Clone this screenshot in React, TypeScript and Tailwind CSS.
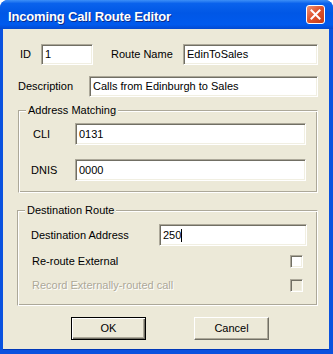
import React from "react";

const sunken =
  "border border-t-[#ACA899] border-l-[#ACA899] border-r-white border-b-white shadow-[inset_1px_1px_0_#716F64,inset_-1px_-1px_0_#F1EFE2]";

function Field({ value, className, caret }: { value: string; className: string; caret?: boolean }) {
  return (
    <div className={`bg-white flex items-center pl-[3px] text-[11px] text-black ${sunken} ${className}`}>
      <span className="leading-none">{value}</span>
      {caret && <span className="w-px h-[13px] bg-black" />}
    </div>
  );
}

function Check({ disabled }: { disabled?: boolean }) {
  return <div className={`w-[13px] h-[13px] ${sunken} ${disabled ? "bg-[#ECE9D8]" : "bg-white"}`} />;
}

function Group({ title, className, children }: { title: string; className: string; children: React.ReactNode }) {
  // etched frame like the classic group box
  return (
    <div
      className={`relative border border-t-[#ACA899] border-l-[#ACA899] border-r-white border-b-white shadow-[inset_1px_1px_0_#fff,inset_-1px_-1px_0_#ACA899] ${className}`}
    >
      <span className="absolute left-[7px] top-[-8px] bg-[#ECE9D8] px-[2px] text-[11px] leading-[14px]">{title}</span>
      {children}
    </div>
  );
}

export default function App() {
  return (
    <div className="w-[333px] h-[354px] flex flex-col rounded-t-[8px] bg-[#0A52DF] font-['Liberation_Sans',Arial,sans-serif] overflow-hidden">
      {/* title bar */}
      <div className="h-[29px] shrink-0 flex items-center pl-[8px] pr-[8px] pt-[4px] bg-[linear-gradient(#3D8FF7_0%,#0A62EC_12%,#0057E6_45%,#005AEE_85%,#0349D0_100%)]">
        <span className="flex-1 text-[13px] font-bold text-white leading-none tracking-[-0.15px] [text-shadow:1px_1px_0_#0B2B8A]">
          Incoming Call Route Editor
        </span>
        <div className="w-[19px] h-[19px] mb-[5px] rounded-[3px] border border-white bg-[linear-gradient(135deg,#EE9478_0%,#E0552F_45%,#C43B16_100%)] flex items-center justify-center">
          <svg width="11" height="11" viewBox="0 0 11 11">
            <path d="M1.5 1.5 L9.5 9.5 M9.5 1.5 L1.5 9.5" stroke="#fff" strokeWidth="2" strokeLinecap="square" />
          </svg>
        </div>
      </div>

      {/* body */}
      <div className="flex-1 ml-[3px] mr-[4px] mb-[4px] bg-[#ECE9D8] text-[11px] text-black flex flex-col shadow-[inset_0_-1px_0_#0038B8]">
        <div className="mt-[15px] h-[21px] flex items-center">
          <span className="ml-[17px] w-[21px]">ID</span>
          <Field value="1" className="w-[52px] h-[21px]" />
          <span className="ml-[18px] w-[72px]">Route Name</span>
          <Field value="EdinToSales" className="w-[135px] h-[21px]" />
        </div>

        <div className="mt-[11px] h-[21px] flex items-center">
          <span className="ml-[15px] w-[71px]">Description</span>
          <Field value="Calls from Edinburgh to Sales" className="w-[229px] h-[21px]" />
        </div>

        <Group title="Address Matching" className="mt-[13px] ml-[15px] w-[300px] h-[83px]">
          <div className="mt-[12px] h-[22px] flex items-center">
            <span className="ml-[14px] w-[42px]">CLI</span>
            <Field value="0131" className="w-[231px] h-[22px]" />
          </div>
          <div className="mt-[14px] h-[22px] flex items-center">
            <span className="ml-[12px] w-[44px]">DNIS</span>
            <Field value="0000" className="w-[231px] h-[22px]" />
          </div>
        </Group>

        <Group title="Destination Route" className="mt-[17px] ml-[14px] w-[301px] h-[96px]">
          <div className="mt-[13px] h-[22px] flex items-center">
            <span className="ml-[13px] w-[128px]">Destination Address</span>
            <Field value="250" caret className="w-[148px] h-[22px]" />
          </div>
          <div className="mt-[9px] h-[13px] flex items-center">
            <span className="ml-[14px] w-[258px]">Re-route External</span>
            <Check />
          </div>
          <div className="mt-[11px] h-[13px] flex items-center">
            <span className="ml-[14px] w-[258px] text-[#ACA899] [text-shadow:1px_1px_0_#fff]">
              Record Externally-routed call
            </span>
            <Check disabled />
          </div>
        </Group>

        <div className="mt-[11px] flex">
          <button className="ml-[68px] w-[75px] h-[23px] bg-[#ECE9D8] border border-black shadow-[inset_1px_1px_0_#fff,inset_-1px_-1px_0_#716F64,inset_-2px_-2px_0_#ACA899] text-[11px] flex items-center justify-center">
            OK
          </button>
          <button className="ml-[48px] w-[75px] h-[23px] bg-[#ECE9D8] border border-t-white border-l-white border-r-[#716F64] border-b-[#716F64] shadow-[inset_-1px_-1px_0_#ACA899] text-[11px] flex items-center justify-center">
            Cancel
          </button>
        </div>
      </div>
    </div>
  );
}
